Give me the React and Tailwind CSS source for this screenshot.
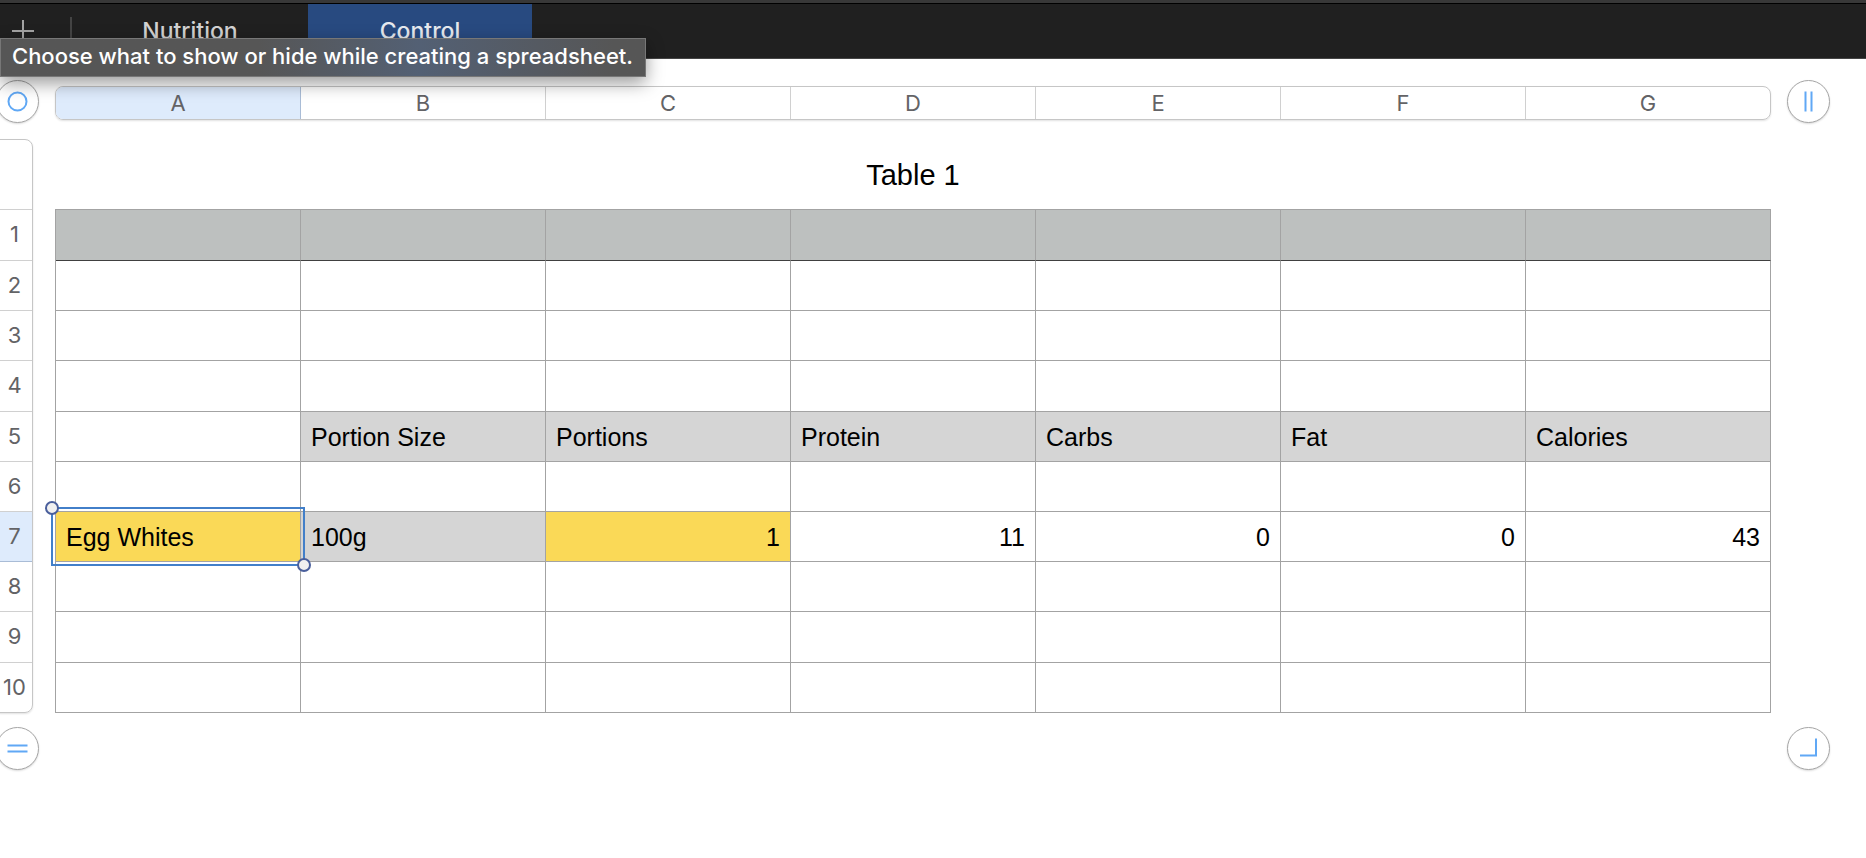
// src/App.jsx
import React, { useState } from 'react';

const columns = ['A', 'B', 'C', 'D', 'E', 'F', 'G'];

const rows = [
  { id: 1, height: 'h-[51px]', header: true },
  { id: 2, height: 'h-[50px]' },
  { id: 3, height: 'h-[50px]' },
  { id: 4, height: 'h-[51px]' },
  {
    id: 5,
    height: 'h-[50px]',
    cells: {
      B: { text: 'Portion Size', fill: 'bg-[#d5d5d5]' },
      C: { text: 'Portions', fill: 'bg-[#d5d5d5]' },
      D: { text: 'Protein', fill: 'bg-[#d5d5d5]' },
      E: { text: 'Carbs', fill: 'bg-[#d5d5d5]' },
      F: { text: 'Fat', fill: 'bg-[#d5d5d5]' },
      G: { text: 'Calories', fill: 'bg-[#d5d5d5]' },
    },
  },
  { id: 6, height: 'h-[50px]' },
  {
    id: 7,
    height: 'h-[50px]',
    cells: {
      A: { text: 'Egg Whites', fill: 'bg-[#fad957]' },
      B: { text: '100g', fill: 'bg-[#d5d5d5]' },
      C: { text: '1', fill: 'bg-[#fad957]', number: true },
      D: { text: '11', number: true },
      E: { text: '0', number: true },
      F: { text: '0', number: true },
      G: { text: '43', number: true },
    },
  },
  { id: 8, height: 'h-[50px]' },
  { id: 9, height: 'h-[51px]' },
  { id: 10, height: 'h-[50px]' },
];

const RoundButton = ({ label, className, children }) => (
  <button
    type="button"
    aria-label={label}
    className={`flex size-[43px] shrink-0 items-center justify-center rounded-full border border-[#a6a6a6] bg-white shadow-[0_1px_2px_rgba(0,0,0,0.15)] ${className}`}
  >
    <svg width="21" height="21" viewBox="0 0 21 21" fill="none" stroke="#60a8f5" strokeWidth="2">
      {children}
    </svg>
  </button>
);

// Blue frame with two drag handles round the active cell
const Selection = () => (
  <div className="pointer-events-none absolute -inset-[5px] z-10 border-2 border-[#427fc9]">
    <span className="absolute -left-2 -top-2 size-[14px] rounded-full border-2 border-[#4a5f9c] bg-[#f0f0f0]" />
    <span className="absolute -bottom-2 -right-2 size-[14px] rounded-full border-2 border-[#4a5f9c] bg-[#f0f0f0]" />
  </div>
);

const App = () => {
  const [activeTab, setActiveTab] = useState('Control');
  const [selected, setSelected] = useState({ col: 'A', row: 7 });

  return (
    <div className="min-h-screen overflow-hidden bg-white font-['Inter',sans-serif]">

      {/* SHEET TABS */}
      <header className="relative z-20 border-b border-[#454545] bg-[#202020]">
        <div className="h-1 border-b border-black bg-[#383838]" />
        <div className="flex h-[54px]">
          <button type="button" aria-label="Add sheet" className="flex w-[70px] shrink-0 justify-center pr-6 pt-4">
            <svg width="22" height="22" viewBox="0 0 22 22" className="shrink-0" stroke="#a3a3a3" strokeWidth="2">
              <path d="M11 0v22M0 11h22" />
            </svg>
          </button>
          <div className="mt-[13px] h-7 w-0.5 bg-[#444]" />
          {['Nutrition', 'Control'].map(tab => (
            <button
              key={tab}
              type="button"
              onClick={() => setActiveTab(tab)}
              className={`flex justify-center pt-[13px] text-[23px] leading-7 font-medium ${
                tab === 'Nutrition' ? 'w-[236px]' : 'w-[224px]'
              } ${activeTab === tab ? 'bg-[#284a80] text-[#e6e9ee]' : 'text-[#d2d2d2]'}`}
            >
              {tab}
            </button>
          ))}
        </div>

        {/* TOOLTIP */}
        <div
          role="tooltip"
          className="absolute left-0 top-[38px] flex h-[39px] items-center whitespace-nowrap border border-[#777] bg-linear-to-r from-[#565656] from-40% via-[#536074] via-65% to-[#565656] to-95% pl-[11px] pr-3 pb-1 text-[22px] leading-7 font-medium text-white shadow-[0_6px_18px_rgba(0,0,0,0.4)]"
        >
          Choose what to show or hide while creating a spreadsheet.
        </div>
      </header>

      <main className="pt-[21px]">

        {/* COLUMN HEADERS */}
        <div className="flex items-start">
          <div className="w-[55px] shrink-0">
            <RoundButton label="Select table" className="-ml-1">
              <circle cx="10.5" cy="10.5" r="9" />
            </RoundButton>
          </div>
          <div className="mt-1.5 flex h-[34px] flex-1 overflow-hidden rounded-lg border border-[#c6c6c6] shadow-[0_1px_2px_rgba(0,0,0,0.12)]">
            {columns.map(col => (
              <button
                key={col}
                type="button"
                onClick={() => setSelected({ ...selected, col })}
                className={`flex-1 border-r text-[22px] leading-8 text-[#636366] last:border-r-0 ${
                  selected.col === col ? 'border-[#a9bcd6] bg-[#deebfc]' : 'border-[#d0d0d0]'
                }`}
              >
                {col}
              </button>
            ))}
          </div>
          <div className="w-[95px] shrink-0">
            <RoundButton label="Add column" className="ml-4">
              <path d="M7.5 0.5v20M13.5 0.5v20" />
            </RoundButton>
          </div>
        </div>

        <div className="mt-4 flex items-start">

          {/* ROW HEADERS */}
          <div className="w-[55px] shrink-0">
            <div className="-ml-2 flex w-[41px] flex-col overflow-hidden rounded-lg border border-[#c6c6c6] shadow-[0_1px_2px_rgba(0,0,0,0.12)]">
              <div className="h-[70px] border-b border-[#d0d0d0]" />
              {rows.map(row => (
                <button
                  key={row.id}
                  type="button"
                  onClick={() => setSelected({ ...selected, row: row.id })}
                  className={`border-b pb-0.5 pl-1 text-center text-[22px] leading-7 text-[#636366] last:h-[49px] last:border-b-0 ${row.height} ${
                    selected.row === row.id ? 'border-[#a9bcd6] bg-[#deebfc]' : 'border-[#d0d0d0]'
                  }`}
                >
                  {row.id}
                </button>
              ))}
            </div>
          </div>

          {/* TABLE */}
          <div className="flex-1">
            <table className="w-full table-fixed border-separate border-spacing-0 border-l border-t border-[#a3a3a3] font-['Liberation_Sans',Arial,sans-serif] text-black">
              <caption className="h-[70px] pt-4 text-[29px] leading-10">Table 1</caption>
              <tbody className="text-[25px] leading-7">
                {rows.map(row => (
                  <tr key={row.id} className={row.height}>
                    {columns.map(col => {
                      const cell = row.cells?.[col];
                      const isSelected = selected.col === col && selected.row === row.id;
                      return (
                        <td
                          key={col}
                          onClick={() => setSelected({ col, row: row.id })}
                          className={`relative border-r border-b border-r-[#a3a3a3] px-2.5 py-0 align-middle ${
                            row.header ? 'border-b-[#404040] bg-[#bdc0bf]' : 'border-b-[#a3a3a3]'
                          } ${cell?.fill || ''} ${cell?.number ? 'text-right' : 'text-left'}`}
                        >
                          {cell?.text}
                          {isSelected && <Selection />}
                        </td>
                      );
                    })}
                  </tr>
                ))}
              </tbody>
            </table>
          </div>
          <div className="w-[95px] shrink-0" />
        </div>

        {/* RESIZE CONTROLS */}
        <div className="mt-3.5 flex justify-between">
          <RoundButton label="Add row" className="-ml-1">
            <path d="M0.5 7.5h20M0.5 13.5h20" />
          </RoundButton>
          <RoundButton label="Resize table" className="mr-9">
            <path d="M2 17.5h16V0.5" />
          </RoundButton>
        </div>

      </main>
    </div>
  );
};

export default App;
